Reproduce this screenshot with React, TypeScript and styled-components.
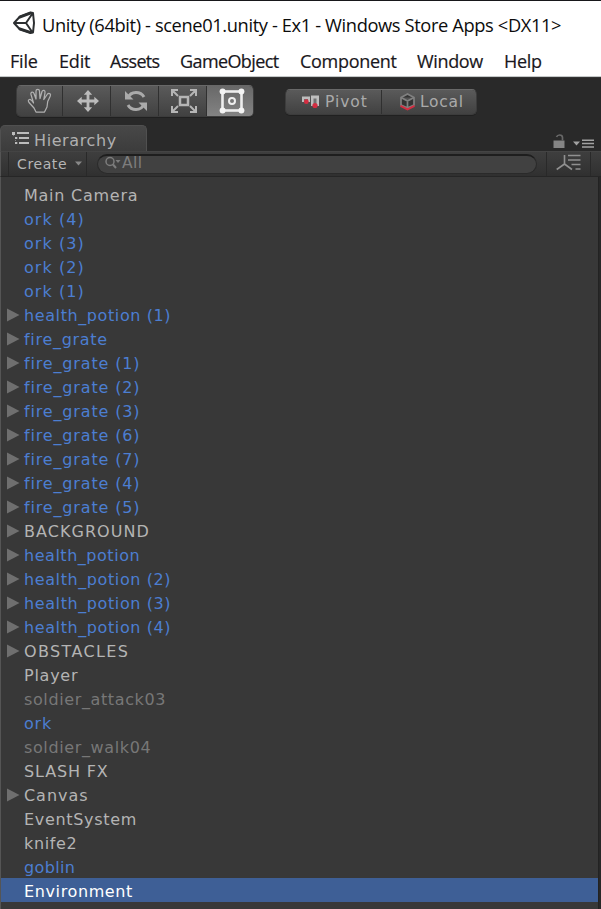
import React from "react";
import styled, { createGlobalStyle } from "styled-components";

const GlobalStyle = createGlobalStyle`
  * { box-sizing: border-box; }
  html, body { margin: 0; background: #383838; overflow: hidden; }
`;

const uiFont = `"DejaVu Sans", Verdana, sans-serif`;

const Window = styled.div`
  width: 601px;
  height: 909px;
  display: flex;
  flex-direction: column;
  overflow: hidden;
  background: #282828;
  font-family: ${uiFont};
  white-space: nowrap;
`;

const TitleBar = styled.header`
  height: 46px;
  flex: none;
  display: flex;
  align-items: center;
  padding: 0 0 1px 12px;
  gap: 6px;
  border-top: 1px solid #17171a;
  background: #fff;
`;

const Title = styled.h1`
  margin: 0;
  padding-top: 3px;
  font: 400 18.3px/26px "Open Sans", "Noto Sans", sans-serif;
  letter-spacing: -0.38px;
  color: #0c0c0c;
`;

const MenuBar = styled.nav`
  height: 31px;
  flex: none;
  display: flex;
  padding-left: 10px;
  background: #fff;
  border-bottom: 1px solid #c4c8c8;
`;

const MenuItem = styled.span<{ $w: number; $ls: number }>`
  width: ${(p) => p.$w}px;
  font: 400 18px/31px "Open Sans", "Noto Sans", sans-serif;
  letter-spacing: ${(p) => p.$ls}px;
  color: #191720;
  -webkit-text-stroke: 0.2px #191720;
`;

const Toolbar = styled.div`
  height: 48px;
  flex: none;
  display: flex;
  align-items: flex-start;
  padding: 7px 0 0 16px;
  border-top: 1px solid #343434;
  background: #292929;
`;

const Group = styled.div<{ $gap?: number; $top?: number }>`
  display: flex;
  margin-left: ${(p) => p.$gap ?? 0}px;
  margin-top: ${(p) => p.$top ?? 0}px;
  border: 1px solid #3c3c3c;
  border-top-color: #686868;
  border-radius: 5px;
  overflow: hidden;
  box-shadow: 0 1px 0 #202020;
`;

const ToolButton = styled.button<{ $active?: boolean }>`
  width: 48px;
  height: 30px;
  padding: 0 0 1px 2px;
  display: grid;
  place-items: center;
  border: 0;
  border-right: 1px solid #303030;
  background: ${(p) => (p.$active ? "linear-gradient(#686868, #838383)" : "linear-gradient(#5a5a5a, #414141)")};
  &:last-child { border-right: 0; width: 46px; padding-left: 4px; }
  &:first-child { width: 46px; padding-left: 1px; }
`;

const ModeButton = styled.button`
  width: 96px;
  height: 24px;
  padding: 0 0 0 16px;
  display: flex;
  align-items: center;
  gap: 5px;
  border: 0;
  border-right: 1px solid #303030;
  background: linear-gradient(#5a5a5a, #414141);
  color: #aaa;
  font: 15.5px/22px ${uiFont};
  letter-spacing: 0.95px;
  &:last-child { border-right: 0; width: 94px; padding-left: 17px; gap: 4px; letter-spacing: 0.75px; }
`;

const TabRow = styled.div`
  height: 26px;
  flex: none;
  display: flex;
  justify-content: space-between;
  padding-right: 7px;
  background: #292929;
`;

const Tab = styled.div`
  width: 147px;
  display: flex;
  align-items: center;
  gap: 4px;
  padding: 3px 0 0 11px;
  border: 1px solid #505050;
  border-bottom: 0;
  border-radius: 5px 5px 0 0;
  background: linear-gradient(#484848, #3c3c3c);
  color: #b0b0b0;
  font-size: 16px;
  letter-spacing: 0.6px;
  svg { margin-top: -5px; }
`;

const TabTools = styled.div`
  display: flex;
  align-items: flex-end;
  gap: 8px;
  padding-bottom: 2px;
`;

const SearchRow = styled.div`
  height: 26px;
  flex: none;
  display: flex;
  align-items: center;
  padding-left: 7px;
  border-top: 1px solid #444;
  border-left: 1px solid #555;
  border-bottom: 1px solid #262626;
  background: linear-gradient(#3e3e3e, #303030);
`;

const CreateButton = styled.button`
  width: 79px;
  height: 24px;
  padding: 0 4px 1px 8px;
  display: flex;
  align-items: center;
  justify-content: space-between;
  border: solid #292929;
  border-width: 0 1px;
  background: transparent;
  color: #b6b6b6;
  font: 14px/22px ${uiFont};
  letter-spacing: 0.6px;
`;

const Search = styled.div`
  width: 440px;
  height: 20px;
  margin-left: 10px;
  padding: 0 0 4px 7px;
  display: flex;
  align-items: center;
  border: 1px solid #2a2a2a;
  border-top: 2px solid #1e1e1e;
  border-radius: 10px;
  background: #414141;
  color: #7d7d7d;
  font-size: 15.5px;
  line-height: 16px;
  letter-spacing: 0.4px;
`;

const SortButton = styled.div`
  width: 45px;
  height: 24px;
  margin-left: 9px;
  padding-bottom: 3px;
  display: grid;
  place-items: center;
  border: solid #292929;
  border-width: 0 1px;
`;

const Tree = styled.ul`
  margin: 0;
  padding: 5px 0 0;
  width: 599px;
  flex: 1;
  list-style: none;
  border-left: 1px solid #555;
  border-right: 1px solid #222;
  background: #383838;
`;

const toneColor = { plain: "#b4b4b4", prefab: "#4c7ed1", off: "#777" };
type Tone = keyof typeof toneColor;

const Row = styled.li<{ $tone: Tone; $selected?: boolean; $track?: number }>`
  height: 24px;
  display: grid;
  grid-template-columns: 17px 1fr;
  align-items: center;
  padding-left: 6px;
  background: ${(p) => (p.$selected ? "#3e5f96" : "transparent")};
  color: ${(p) => (p.$selected ? "#fff" : toneColor[p.$tone])};
  font-size: 16px;
  line-height: 24px;
  letter-spacing: ${(p) => p.$track ?? 0.62}px;
`;

const Label = styled.span`
  grid-column: 2;
  padding-top: 2px;
`;

const Arrow = () => (
  <svg width="13" height="14" viewBox="0 0 13 14"><path d="M0 .5 12.5 7 0 13.5Z" fill="#6f6f6f" /></svg>
);

const UnityLogo = () => (
  <svg width="24" height="24" viewBox="0 0 24 24" fill="none" stroke="#2c2f31" strokeWidth="2" strokeLinejoin="round">
    <path d="M2 12 8 5.5 18.5 1.5 21 2 22 12 21 21.5 18.5 22 8 18.5ZM2 12H14M14 12 20.5 2.5M14 12 20.5 21.5" />
    <path d="M7 6.5 19 2M7 17.5 19 21.5" strokeWidth="2.8" />
  </svg>
);

const HandIcon = () => (
  <svg width="26" height="26" viewBox="0 0 26 26" fill="none" stroke="#b0b0b0" strokeWidth="1.25" strokeLinejoin="round">
    <path d="M9 24 7 20 2 14.5Q.5 12 2.5 11.5 4 11.3 6.5 15L4 6.5Q3.5 4.5 5 4.2 6.5 4 7.2 6L9 11 9 3Q9 1.3 10.8 1.3 12.3 1.3 12.5 3L13 10.5 15 3.5Q15.6 2 17 2.4 18.4 3 18 4.8L16.8 11.5 20.5 6Q21.8 4.7 23 5.8 24 6.8 23.2 8.3L20.7 13.5 20 19 17.5 24Z" />
  </svg>
);

const MoveIcon = () => (
  <svg width="22" height="22" viewBox="0 0 22 22" fill="#bbb">
    <path d="M11 0 15.2 4.7H12.4V9.6H17.3V6.8L22 11 17.3 15.2V12.4H12.4V17.3H15.2L11 22 6.8 17.3H9.6V12.4H4.7V15.2L0 11 4.7 6.8V9.6H9.6V4.7H6.8Z" />
  </svg>
);

const RotateIcon = () => (
  <svg width="24" height="22" viewBox="0 0 24 22">
    <g fill="none" stroke="#aaa" strokeWidth="3"><path d="M4 8Q6 2.5 12 2.5 17.5 2.5 20 7M20 14Q18 19.5 12 19.5 6.5 19.5 4 15" /></g>
    <path d="M1 1V9.5H9.5ZM23 21V12.5H14.5Z" fill="#aaa" />
  </svg>
);

const ScaleIcon = () => (
  <svg width="26" height="24" viewBox="0 0 26 24" fill="none" stroke="#b5b5b5">
    <rect x="9" y="8" width="8" height="8" strokeWidth="2.5" />
    <path d="M1 7V1H7M19 1H25V7M25 17V23H19M7 23H1V17M1.5 1.5 7 7M24.5 1.5 19 7M24.5 22.5 19 17M1.5 22.5 7 17" strokeWidth="2" />
  </svg>
);

const RectIcon = () => (
  <svg width="26" height="26" viewBox="0 0 26 26" fill="none" stroke="#eee">
    <rect x="3.5" y="3.5" width="19" height="19" strokeWidth="2.6" />
    <circle cx="13" cy="13" r="3" strokeWidth="2" />
    <g fill="#f4f4f4" stroke="none"><circle cx="3.6" cy="3.6" r="3" /><circle cx="22.4" cy="3.6" r="3" /><circle cx="3.6" cy="22.4" r="3" /><circle cx="22.4" cy="22.4" r="3" /></g>
  </svg>
);

const PivotIcon = () => (
  <svg width="18" height="14" viewBox="0 0 18 14">
    <path d="M0 1.5H8V7H0ZM9 .5H17V11H9Z" fill="#bdbdbd" />
    <path d="M2 4H6V7H2ZM11.5 3.5H14.5V9H11.5Z" fill="#707070" />
    <circle cx="4.3" cy="6.7" r="2.4" fill="#d42d41" /><circle cx="13" cy="10.5" r="2.6" fill="#d42d41" />
  </svg>
);

const LocalIcon = () => (
  <svg width="17" height="18" viewBox="0 0 17 18" fill="none">
    <path d="M2 4.5 8.5 1 15 4.5V12L8.5 15 2 12ZM2 4.5 8.5 8 15 4.5M8.5 8V14" fill="#333" stroke="#808080" strokeWidth="1.7" />
    <path d="M1.5 12.8 8.5 16.3 15.5 12.8" stroke="#d42d41" strokeWidth="2" />
  </svg>
);

const TreeIcon = () => (
  <svg width="18" height="14" viewBox="0 0 18 14" fill="#bcbcbc">
    <path d="M0 1H3V4H0ZM5 1H17V3H5ZM3 6H5.3V8H3ZM7 6H17V8H7ZM3 11H5.3V13H3ZM7 11H17V13H7Z" />
    <path d="M1 4H2V5H1ZM3 9H4V10H3Z" opacity=".5" />
  </svg>
);

const LockIcon = () => (
  <svg width="12" height="15" viewBox="0 0 12 15"><path d="M.5 6.5H11.5V14H.5Z" fill="#858585" /><path d="M9.5 6.5V3.5Q9.3 1 6.7 1 4.3 1 3.5 3" fill="none" stroke="#686868" strokeWidth="1.7" /></svg>
);

const PanelMenuIcon = () => (
  <svg width="21" height="10" viewBox="0 0 21 10" fill="#a2a2a2"><path d="M0 2.5H7L3.5 6.5ZM9 .5H21V2H9ZM9 3.8H21V5.3H9ZM9 7.2H21V8.7H9Z" /></svg>
);

const CaretIcon = () => <svg width="7" height="5" viewBox="0 0 7 5"><path d="M0 .5H7L3.5 4.5Z" fill="#888" /></svg>;

const SearchIcon = () => (
  <svg width="17" height="14" viewBox="0 0 17 14" fill="none" stroke="#7d7d7d"><circle cx="5" cy="5.5" r="4" strokeWidth="1.5" /><path d="M8 8.5 11 12" strokeWidth="2" /><path d="M10.5 4H15.5L13 7Z" fill="#7d7d7d" stroke="none" /></svg>
);

const SortIcon = () => (
  <svg width="25" height="17" viewBox="0 0 25 17" fill="none" stroke="#909090" strokeWidth="1.6"><path d="M8.5 1V10.2M8.5 10 .7 15.5M8.5 10 16 15.5M12 1.5H24.5M12 6H24.5M15.5 10.5H24.5M19.5 15H24.5" /></svg>
);

// label, column width, tracking
const menus: [string, number, number][] = [
  ["File", 49, -0.2], ["Edit", 51, -0.15], ["Assets", 70, -0.7], ["GameObject", 120, -0.6],
  ["Component", 117, -0.3], ["Window", 87, -0.35], ["Help", 50, -0.3],
];

interface TreeNode { name: string; tone: Tone; parent?: boolean; selected?: boolean; track?: number }

const numbered = (base: string, ids: number[], track: number, parent = true): TreeNode[] =>
  ids.map((id) => ({ name: `${base} (${id})`, tone: "prefab", parent, track }));

const nodes: TreeNode[] = [
  { name: "Main Camera", tone: "plain", track: 0.75 },
  ...numbered("ork", [4, 3, 2, 1], 1.05, false),
  ...numbered("health_potion", [1], 0.6),
  { name: "fire_grate", tone: "prefab", parent: true, track: 0.7 },
  ...numbered("fire_grate", [1, 2, 3, 6, 7, 4, 5], 0.84),
  { name: "BACKGROUND", tone: "plain", parent: true, track: 1.05 },
  { name: "health_potion", tone: "prefab", parent: true, track: 0.53 },
  ...numbered("health_potion", [2, 3, 4], 0.6),
  { name: "OBSTACLES", tone: "plain", parent: true, track: 1.35 },
  { name: "Player", tone: "plain", track: 0.75 },
  { name: "soldier_attack03", tone: "off" },
  { name: "ork", tone: "prefab", track: 0.8 },
  { name: "soldier_walk04", tone: "off" },
  { name: "SLASH FX", tone: "plain", track: 0.85 },
  { name: "Canvas", tone: "plain", parent: true, track: 0.95 },
  { name: "EventSystem", tone: "plain", track: 0.68 },
  { name: "knife2", tone: "plain" },
  { name: "goblin", tone: "prefab", track: 0.35 },
  { name: "Environment", tone: "plain", selected: true },
];

export default function App() {
  return (
    <Window>
      <GlobalStyle />
      <TitleBar>
        <UnityLogo />
        <Title>Unity (64bit) - scene01.unity - Ex1 - Windows Store Apps &lt;DX11&gt;</Title>
      </TitleBar>
      <MenuBar>
        {menus.map(([name, w, ls]) => <MenuItem key={name} $w={w} $ls={ls}>{name}</MenuItem>)}
      </MenuBar>
      <Toolbar>
        <Group>
          <ToolButton><HandIcon /></ToolButton>
          <ToolButton><MoveIcon /></ToolButton>
          <ToolButton><RotateIcon /></ToolButton>
          <ToolButton><ScaleIcon /></ToolButton>
          <ToolButton $active><RectIcon /></ToolButton>
        </Group>
        <Group $gap={31} $top={4}>
          <ModeButton><PivotIcon />Pivot</ModeButton>
          <ModeButton><LocalIcon />Local</ModeButton>
        </Group>
      </Toolbar>
      <TabRow>
        <Tab><TreeIcon />Hierarchy</Tab>
        <TabTools><LockIcon /><PanelMenuIcon /></TabTools>
      </TabRow>
      <SearchRow>
        <CreateButton>Create<CaretIcon /></CreateButton>
        <Search><SearchIcon />All</Search>
        <SortButton><SortIcon /></SortButton>
      </SearchRow>
      <Tree>
        {nodes.map((n) => (
          <Row key={n.name} $tone={n.tone} $selected={n.selected} $track={n.track}>
            {n.parent && <Arrow />}
            <Label>{n.name}</Label>
          </Row>
        ))}
      </Tree>
    </Window>
  );
}
